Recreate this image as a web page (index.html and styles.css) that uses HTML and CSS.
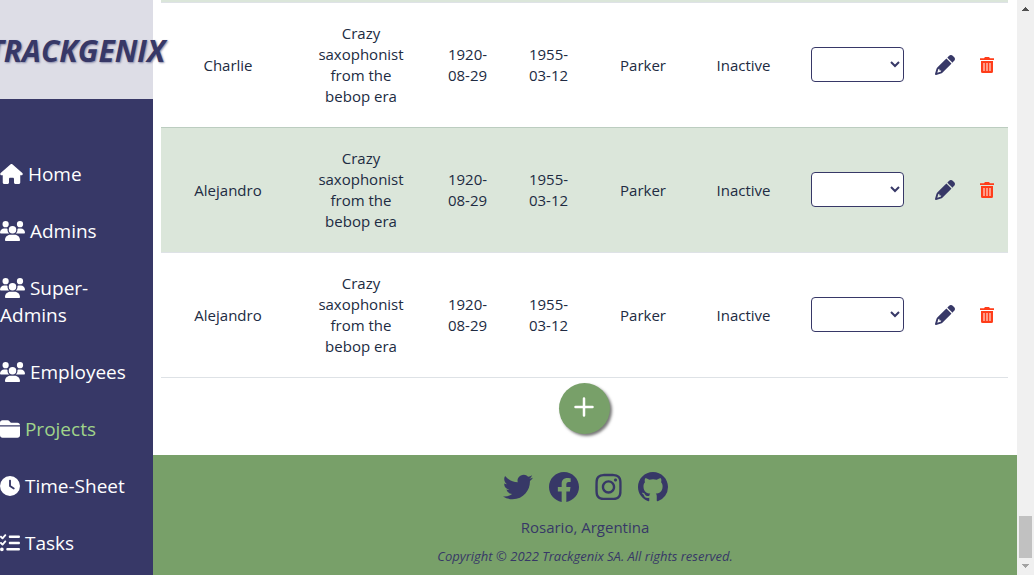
FILE: index.html
```html
<!DOCTYPE html>
<html lang="en">
<head>
<meta charset="utf-8">
<title>Trackgenix - Projects</title>
<link rel="stylesheet" href="styles.css">
</head>
<body>
<svg class="defs" aria-hidden="true">
  <symbol id="house" viewBox="0 0 576 512"><path d="M575.8 255.5c0 18-15 32.1-32 32.1h-32l.7 160.2c0 2.7-.2 5.4-.5 8.1V472c0 22.1-17.9 40-40 40H392c-22.1 0-40-17.9-40-40V384c0-17.7-14.3-32-32-32H256c-17.7 0-32 14.3-32 32v88c0 22.1-17.9 40-40 40H104c-22.1 0-40-17.9-40-40V287.6H32c-18 0-32-14-32-32.1c0-9 3-17 10-24L266.4 8c7-7 15-8 22-8s15 2 21 7L564.8 231.5c8 7 12 15 11 24z"/></symbol>
  <symbol id="users" viewBox="0 0 640 512"><path d="M144 0a80 80 0 1 1 0 160A80 80 0 1 1 144 0zM512 0a80 80 0 1 1 0 160A80 80 0 1 1 512 0zM0 298.7C0 239.8 47.8 192 106.7 192h42.7c15.9 0 31 3.5 44.6 9.7c-1.3 7.2-1.9 14.7-1.9 22.3c0 38.2 16.8 72.5 43.3 96H21.3C9.6 320 0 310.4 0 298.7zM405.3 320h-.7c26.6-23.5 43.3-57.8 43.3-96c0-7.6-.7-15-1.9-22.3c13.6-6.3 28.7-9.7 44.6-9.7h42.7C592.2 192 640 239.8 640 298.7c0 11.8-9.6 21.3-21.3 21.3H405.3zM224 224a96 96 0 1 1 192 0 96 96 0 1 1 -192 0zM128 485.3C128 411.7 187.7 352 261.3 352H378.7C452.3 352 512 411.7 512 485.3c0 14.7-11.9 26.7-26.7 26.7H154.7c-14.7 0-26.7-11.9-26.7-26.7z"/></symbol>
  <symbol id="folder" viewBox="0 0 512 512"><path d="M448 480H64c-35.3 0-64-28.7-64-64V192H512V416c0 35.3-28.7 64-64 64zm64-320H0V96C0 60.7 28.7 32 64 32H192c20.1 0 39.1 9.5 51.2 25.6l19.2 25.6c6 8.1 15.5 12.8 25.6 12.8H448c35.3 0 64 28.7 64 64z"/></symbol>
  <symbol id="clock" viewBox="0 0 512 512"><path d="M256 0a256 256 0 1 1 0 512A256 256 0 1 1 256 0zM232 120V256c0 8 4 15.5 10.7 20l96 64c11 7.4 25.9 4.4 33.3-6.7s4.4-25.9-6.7-33.3L280 243.2V120c0-13.3-10.7-24-24-24s-24 10.7-24 24z"/></symbol>
  <symbol id="tasks" viewBox="0 0 512 512"><path d="M152.1 38.2c9.9 8.9 10.7 24 1.8 33.9l-72 80c-4.4 4.9-10.6 7.8-17.2 7.9s-12.9-2.4-17.6-7L7 113C-2.3 103.6-2.3 88.4 7 79s24.6-9.4 33.9 0l22.1 22.1 55.1-61.2c8.9-9.9 24-10.7 33.9-1.8zm0 160c9.9 8.9 10.7 24 1.8 33.9l-72 80c-4.4 4.9-10.6 7.8-17.2 7.9s-12.9-2.4-17.6-7L7 273c-9.4-9.4-9.4-24.6 0-33.9s24.6-9.4 33.9 0l22.1 22.1 55.1-61.2c8.9-9.9 24-10.7 33.9-1.8zM224 96c0-17.7 14.3-32 32-32H480c17.7 0 32 14.3 32 32s-14.3 32-32 32H256c-17.7 0-32-14.3-32-32zm0 160c0-17.7 14.3-32 32-32H480c17.7 0 32 14.3 32 32s-14.3 32-32 32H256c-17.7 0-32-14.3-32-32zM160 416c0-17.7 14.3-32 32-32H480c17.7 0 32 14.3 32 32s-14.3 32-32 32H192c-17.7 0-32-14.3-32-32zM48 368a48 48 0 1 1 0 96 48 48 0 1 1 0-96z"/></symbol>
  <symbol id="pencil" viewBox="0 0 512 512"><path d="M410.3 231l11.3-11.3-33.9-33.9-62.1-62.1L291.7 89.8l-11.3 11.3-22.6 22.6L58.6 322.9c-10.4 10.4-18 23.3-22.2 37.4L1 480.7c-2.5 8.4-.2 17.5 6.1 23.7s15.3 8.5 23.7 6.1l120.3-35.4c14.1-4.2 27-11.8 37.4-22.2L387.7 253.7 410.3 231zM160 399.4l-9.1 22.7c-4 3.1-8.5 5.4-13.3 6.9L59.4 452l23-78.1c1.4-4.9 3.8-9.4 6.9-13.3l22.7-9.1v32c0 8.8 7.2 16 16 16h32zM362.7 18.7L348.3 33.2 325.7 55.8 314.3 67.1l33.9 33.9 62.1 62.1 33.9 33.9 11.3-11.3 22.6-22.6 14.5-14.5c25-25 25-65.5 0-90.5L453.3 18.7c-25-25-65.5-25-90.5 0z"/></symbol>
  <symbol id="trash" viewBox="0 0 14 16"><path d="M4 1.200L5 0h4l1 1.200h4V3H0V1.200zM1 4h12v10.500a1.500 1.500 0 0 1-1.500 1.500h-9A1.500 1.500 0 0 1 1 14.500z"/><path class="slat" d="M3 6h2v8H3zM6 6h2v8H6zM9 6h2v8H9z"/></symbol>
  <symbol id="plus" viewBox="0 0 20 20"><path d="M10 1.500v17M1.500 10h17" fill="none" stroke="currentColor" stroke-width="2.500" stroke-linecap="round"/></symbol>
  <symbol id="twitter" viewBox="0 0 24 24"><path d="M23.953 4.570a10 10 0 01-2.825.775 4.958 4.958 0 002.163-2.723c-.951.555-2.005.959-3.127 1.184a4.920 4.920 0 00-8.384 4.482C7.690 8.095 4.067 6.130 1.640 3.162a4.822 4.822 0 00-.666 2.475c0 1.710.870 3.213 2.188 4.096a4.904 4.904 0 01-2.228-.616v.060a4.923 4.923 0 003.946 4.827 4.996 4.996 0 01-2.212.085 4.936 4.936 0 004.604 3.417 9.867 9.867 0 01-6.102 2.105c-.390 0-.779-.023-1.170-.067a13.995 13.995 0 007.557 2.209c9.053 0 13.998-7.496 13.998-13.985 0-.210 0-.420-.015-.630A9.935 9.935 0 0024 4.590z"/></symbol>
  <symbol id="facebook" viewBox="0 0 24 24"><path d="M24 12.073c0-6.627-5.373-12-12-12s-12 5.373-12 12c0 5.990 4.388 10.954 10.125 11.854v-8.385H7.078v-3.470h3.047V9.430c0-3.007 1.792-4.669 4.533-4.669 1.312 0 2.686.235 2.686.235v2.953H15.830c-1.491 0-1.956.925-1.956 1.874v2.250h3.328l-.532 3.470h-2.796v8.385C19.612 23.027 24 18.062 24 12.073z"/></symbol>
  <symbol id="instagram" viewBox="0 0 448 512"><path d="M224.1 141c-63.6 0-114.9 51.3-114.9 114.9s51.3 114.9 114.9 114.9S339 319.5 339 255.900 287.7 141 224.1 141zm0 189.6c-41.1 0-74.7-33.5-74.7-74.7s33.5-74.7 74.7-74.7 74.7 33.500 74.7 74.7-33.6 74.7-74.7 74.7zm146.4-194.3c0 14.9-12 26.8-26.8 26.8-14.9 0-26.8-12-26.8-26.8s12-26.8 26.8-26.8 26.8 12 26.8 26.8zm76.1 27.2c-1.7-35.9-9.9-67.7-36.2-93.9-26.2-26.2-58-34.4-93.9-36.2-37-2.1-147.9-2.1-184.9 0-35.8 1.7-67.6 9.9-93.9 36.1s-34.4 58-36.2 93.9c-2.1 37-2.1 147.9 0 184.9 1.7 35.9 9.9 67.7 36.2 93.9s58 34.4 93.9 36.2c37 2.1 147.9 2.1 184.9 0 35.9-1.7 67.7-9.9 93.9-36.2 26.2-26.2 34.4-58 36.2-93.9 2.1-37 2.1-147.8 0-184.8zM398.8 388c-7.8 19.6-22.9 34.7-42.6 42.6-29.5 11.7-99.5 9-132.1 9s-102.7 2.6-132.1-9c-19.6-7.8-34.7-22.9-42.6-42.6-11.7-29.5-9-99.5-9-132.1s-2.6-102.7 9-132.1c7.8-19.6 22.9-34.7 42.6-42.6 29.5-11.7 99.5-9 132.1-9s102.7-2.6 132.1 9c19.6 7.8 34.7 22.9 42.6 42.6 11.7 29.5 9 99.5 9 132.1s2.7 102.7-9 132.1z"/></symbol>
  <symbol id="github" viewBox="0 0 16 16"><path d="M8 0C3.580 0 0 3.580 0 8c0 3.540 2.290 6.530 5.470 7.590.4.070.550-.170.550-.380 0-.190-.010-.820-.010-1.490-2.010.370-2.530-.490-2.690-.940-.090-.230-.480-.940-.820-1.130-.280-.150-.680-.520-.010-.530.630-.010 1.080.580 1.230.820.720 1.210 1.870.870 2.330.660.070-.520.280-.870.510-1.070-1.780-.2-3.640-.890-3.640-3.950 0-.870.310-1.590.820-2.150-.080-.2-.360-1.020.080-2.120 0 0 .670-.210 2.200.820.640-.180 1.320-.270 2-.270s1.360.090 2 .270c1.530-1.040 2.200-.820 2.200-.820.440 1.100.160 1.920.080 2.120.510.560.820 1.270.820 2.150 0 3.070-1.870 3.750-3.650 3.950.290.250.540.730.540 1.480 0 1.070-.010 1.930-.010 2.200 0 .210.150.460.550.380A8.010 8.010 0 0016 8c0-4.420-3.580-8-8-8z"/></symbol>
</svg>
<div class="page">
  <aside class="sidebar">
    <div class="brand"><span class="brand-name">TRACKGENIX</span></div>
    <nav class="menu">
      <a href="#"><svg class="icon wide"><use href="#house"/></svg> Home</a>
      <a href="#"><svg class="icon wider"><use href="#users"/></svg> Admins</a>
      <a href="#"><svg class="icon wider"><use href="#users"/></svg> Super-Admins</a>
      <a href="#"><svg class="icon wider"><use href="#users"/></svg> Employees</a>
      <a href="#" class="active"><svg class="icon"><use href="#folder"/></svg> Projects</a>
      <a href="#"><svg class="icon"><use href="#clock"/></svg> Time-Sheet</a>
      <a href="#"><svg class="icon"><use href="#tasks"/></svg> Tasks</a>
    </nav>
  </aside>
  <div class="content">
    <main class="main">
      <table class="projects">
        <colgroup><col class="c-name"><col class="c-desc"><col class="c-date"><col class="c-date"><col class="c-client"><col class="c-status"><col class="c-team"><col class="c-act"><col class="c-act"></colgroup>
        <tbody>
          <tr class="edge"><td colspan="9"></td></tr>
          <tr>
            <td>Charlie</td><td>Crazy saxophonist from the bebop era</td><td>1920-08-29</td><td>1955-03-12</td><td>Parker</td><td>Inactive</td>
            <td class="tool"><select aria-label="Employees of Charlie"><option></option></select></td>
            <td class="tool"><button class="edit" aria-label="Edit"><svg><use href="#pencil"/></svg></button></td>
            <td class="tool"><button class="delete" aria-label="Delete"><svg><use href="#trash"/></svg></button></td>
          </tr>
          <tr class="shaded">
            <td>Alejandro</td><td>Crazy saxophonist from the bebop era</td><td>1920-08-29</td><td>1955-03-12</td><td>Parker</td><td>Inactive</td>
            <td class="tool"><select aria-label="Employees of Alejandro"><option></option></select></td>
            <td class="tool"><button class="edit" aria-label="Edit"><svg><use href="#pencil"/></svg></button></td>
            <td class="tool"><button class="delete" aria-label="Delete"><svg><use href="#trash"/></svg></button></td>
          </tr>
          <tr>
            <td>Alejandro</td><td>Crazy saxophonist from the bebop era</td><td>1920-08-29</td><td>1955-03-12</td><td>Parker</td><td>Inactive</td>
            <td class="tool"><select aria-label="Employees of Alejandro"><option></option></select></td>
            <td class="tool"><button class="edit" aria-label="Edit"><svg><use href="#pencil"/></svg></button></td>
            <td class="tool"><button class="delete" aria-label="Delete"><svg><use href="#trash"/></svg></button></td>
          </tr>
        </tbody>
      </table>
      <button class="add" aria-label="Add project"><svg><use href="#plus"/></svg></button>
    </main>
    <footer class="footer">
      <div class="social">
        <a href="#" aria-label="Twitter"><svg><use href="#twitter"/></svg></a>
        <a href="#" aria-label="Facebook"><svg><use href="#facebook"/></svg></a>
        <a href="#" aria-label="Instagram" class="narrow"><svg><use href="#instagram"/></svg></a>
        <a href="#" aria-label="GitHub"><svg><use href="#github"/></svg></a>
      </div>
      <p class="place">Rosario, Argentina</p>
      <p class="copyright">Copyright © 2022 Trackgenix SA. All rights reserved.</p>
    </footer>
  </div>
  <div class="scrollbar" aria-hidden="true">
    <svg class="arrow up" viewBox="0 0 7 4"><path d="M3 0h1v1h1v1h1v1h1v1H0V3h1V2h1V1h1z"/></svg>
    <div class="thumb"></div>
    <svg class="arrow down" viewBox="0 0 7 4"><path d="M0 0h7v1H6v1H5v1H4v1H3V3H2V2H1V1H0z"/></svg>
  </div>
</div>
</body>
</html>
```
FILE: styles.css
```css
* { box-sizing: border-box; }
body {
  margin: 0;
  font-family: "Open Sans", "Noto Sans", sans-serif;
  font-size: 15px;
  line-height: 21px;
  color: #212b42;
  background: #fff;
}
svg { fill: currentColor; display: block; }
.defs { display: none; }
button { border: 0; background: none; padding: 0; cursor: pointer; }
.page { display: flex; height: 100vh; overflow: hidden; }

.sidebar { flex: 0 0 153px; min-width: 0; background: #373867; color: #fff; z-index: 1; }
.brand {
  display: flex;
  justify-content: center;
  align-items: center;
  height: 99px;
  padding-top: 2px;
  background: #dddde6;
}
.brand-name {
  color: #373867;
  font-size: 30px;
  line-height: 40px;
  font-weight: 700;
  font-style: italic;
  text-shadow: 1px 1px 2px #8889a8;
}
.menu { display: flex; flex-direction: column; gap: 30px; padding-top: 62px; }
.menu a {
  color: #fff;
  font-size: 19px;
  line-height: 27px;
  text-decoration: none;
}
.menu .active { color: #a0d48a; }
.icon { display: inline-block; width: 20px; height: 20px; vertical-align: -3px; color: #fff; }
.icon.wide { width: 23px; }
.icon.wider { width: 25px; }

.content { flex: 1; min-width: 0; display: flex; flex-direction: column; }
.main { flex: 1; padding: 0 9px 0 8px; }
.projects { width: 100%; table-layout: fixed; border-collapse: separate; border-spacing: 0; }
.c-name { width: 134px; }
.c-desc { width: 132px; }
.c-date { width: 81px; }
.c-client { width: 108px; }
.c-status { width: 93px; }
.c-team { width: 134px; }
.c-act { width: 42px; }
.projects td {
  padding: 20px 16px;
  text-align: center;
  vertical-align: middle;
  border-bottom: 1px solid #dee2e6;
}
.projects .edge td { height: 3px; padding: 0; background: #dbe6da; }
.projects .shaded td { background: #dbe6da; }
.projects tr:nth-child(2) td { border-bottom-color: #bccdc0; }
.projects .tool { padding: 0 0 1px; }
.projects select {
  display: block;
  width: 93px;
  height: 35px;
  margin: 0 auto;
  border: 1px solid #373867;
  border-radius: 4px;
  background: #fff;
  color: #373867;
}
.edit, .delete { display: block; margin: 0 auto; }
.edit { color: #373867; }
.edit svg { width: 20px; height: 20px; }
.delete { color: #ff3d1a; }
.delete svg { width: 14px; height: 16px; }
.slat { fill: #ff9a86; }
.add {
  display: flex;
  justify-content: center;
  align-items: center;
  width: 51px;
  height: 51px;
  margin: 5px auto 0;
  padding-bottom: 3px;
  padding-right: 2px;
  border-radius: 50%;
  background: #78a069;
  color: #fff;
  box-shadow: 2px 2px 3px #777;
}
.add svg { width: 20px; height: 20px; }

.footer {
  height: 120px;
  padding-top: 17px;
  display: flex;
  flex-direction: column;
  align-items: center;
  background: #78a069;
  color: #373867;
}
.footer p { margin: 0; }
.social { display: flex; gap: 16px; }
.social a { color: inherit; }
.social svg { width: 30px; height: 30px; }
.social .narrow svg { width: 27px; }
.place { padding-top: 15px; }
.copyright { padding-top: 8px; font-size: 13px; font-style: italic; }

.scrollbar {
  flex: 0 0 17px;
  display: flex;
  flex-direction: column;
  align-items: center;
  padding: 7px 0;
  background: #f0f0f0;
}
.arrow { width: 7px; height: 4px; flex: none; }
.up { color: #505050; }
.down { color: #a3a3a3; }
.thumb { width: 13px; height: 42px; margin: auto 0 6px; background: #c1c1c1; }
```
